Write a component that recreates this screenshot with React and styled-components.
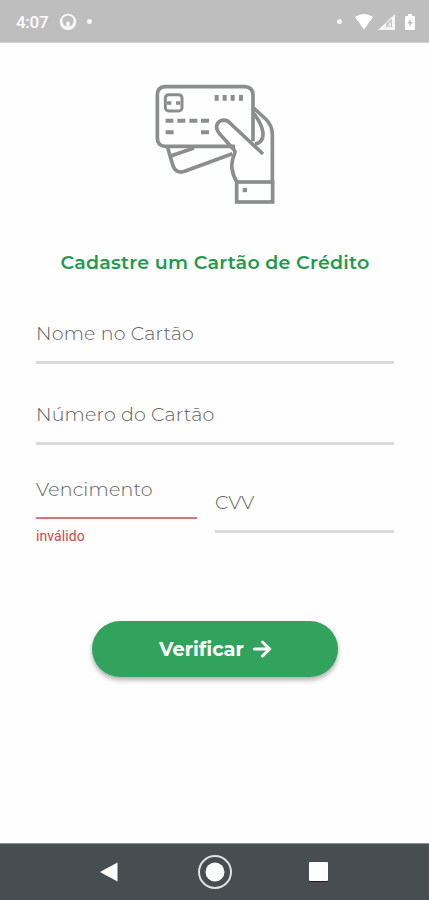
import React from 'react'
import styled, { createGlobalStyle } from 'styled-components'

const GlobalStyle = createGlobalStyle`
  * {
    box-sizing: border-box;
  }

  body {
    margin: 0;
    background-color: #fefefe;
  }
`

const Screen = styled.div`
  display: flex;
  flex-direction: column;
  width: 429px;
  height: 900px;
  overflow: hidden;
  background-color: #fefefe;
  font-family: Montserrat, Inter, sans-serif;
`

const StatusBar = styled.header`
  display: flex;
  align-items: center;
  flex-shrink: 0;
  height: 43px;
  padding: 1px 14px 0 16px;
  background-color: #bebebe;
  border-bottom: 1px solid #cfcfcf;
  color: #fdfdfd;

  svg {
    display: block;
  }
`

const Clock = styled.span`
  width: 33px;
  margin-right: 10px;
  font-family: Roboto, sans-serif;
  font-size: 17px;
  font-weight: 500;
  line-height: 20px;
  letter-spacing: -0.3px;
`

const StatusIcon = styled.svg`
  margin-left: ${props => props.$left || 0};
`

const Dot = styled.i`
  width: 5px;
  height: 5px;
  margin-left: ${props => props.$left};
  margin-right: ${props => props.$right || 0};
  border-radius: 50%;
  background-color: #f6f6f6;
`

const Content = styled.main`
  display: flex;
  flex-direction: column;
  flex: 1;
  padding: 32px 35px 0 36px;
`

const Illustration = styled.svg`
  display: block;
  width: 140px;
  height: 140px;
  margin-left: 109px;
  flex-shrink: 0;
`

const Title = styled.h1`
  margin: 35px 0 0;
  padding-left: 24.5px;
  color: #229a4e;
  font-size: 19px;
  font-weight: 600;
  line-height: 26px;
  letter-spacing: 0.22px;
  white-space: nowrap;
`

const Form = styled.form`
  display: flex;
  flex-direction: column;
`

const Field = styled.label`
  display: block;
  width: ${props => props.$width || '358px'};
  height: ${props => (props.$invalid ? '42px' : '43px')};
  margin-top: ${props => props.$top};
  border-bottom: ${props => (props.$invalid ? '2px solid #dc7474' : '3px solid #dadada')};
  color: #606060;
  font-size: 19px;
  font-weight: 300;
  line-height: 26px;
  letter-spacing: ${props => props.$spacing || '0.2px'};
  white-space: nowrap;
`

const FieldRow = styled.div`
  display: flex;
  justify-content: space-between;
  height: 102px;
`

const ErrorText = styled.span`
  display: block;
  margin-top: 8px;
  color: #d24545;
  font-family: Roboto, sans-serif;
  font-size: 14px;
  line-height: 18px;
  letter-spacing: 0.1px;
`

const Button = styled.button`
  display: flex;
  align-items: center;
  align-self: center;
  width: 246px;
  height: 56px;
  margin-top: 74px;
  padding: 0 0 1px 67px;
  border: 0;
  border-radius: 28px;
  background-color: #31a35d;
  box-shadow: 0 3px 5px rgba(0, 0, 0, 0.32);
  color: #fff;
  font-family: inherit;
  font-size: 19.4px;
  font-weight: 700;

  span {
    width: 94px;
    text-align: left;
  }
`

const NavBar = styled.nav`
  display: flex;
  align-items: center;
  flex-shrink: 0;
  height: 57px;
  padding: 0 100px 0 98px;
  border-top: 1px solid #8c9193;
  background-color: #464e52;

  svg {
    display: block;
  }

  svg:nth-child(2) {
    margin-left: 78px;
  }

  svg:nth-child(3) {
    margin-left: 76px;
  }
`

const CardIllustration = () => (
  <Illustration viewBox="0 0 420 420" fill="none" stroke="#8b8e8c" strokeWidth="11">
    <path d="M270 214H60Q37 212 37 188V59Q37 36 60 35H300Q323 37 324 59V199" />
    <rect x="61" y="59" width="50" height="49" rx="10" strokeWidth="9" />
    <path d="M66 84H79M93 84H106" strokeWidth="11" />
    <path d="M215 60V77M239 60V77M263 60V77M288 60V77" strokeWidth="12" />
    <path d="M62 137H85M97 137H121M133 137H157M168 137H192M62 172H86M168 172H192" strokeWidth="12" />
    <path d="M68 218L83 269Q92 298 119 289L262 236" />
    <path d="M79 242L147 219" />
    <path d="M354 237L258 147C241 127 218 136 215 153C213 165 219 171 226 179L267 224Q272 230 268 238C255 265 260 297 276 321" />
    <path d="M326 99L362 132Q382 151 382 178V321" />
    <path d="M327 116C341 135 352 155 354 174C355 192 347 204 330 207" />
    <rect x="275" y="321" width="108" height="60" />
    <path d="M293 345H306" strokeWidth="13" />
  </Illustration>
)

const fields = [
  { label: 'Nome no Cartão', top: '45px' },
  { label: 'Número do Cartão', top: '38px' },
]

const App = () => (
  <>
    <GlobalStyle />
    <Screen>
      <StatusBar>
        <Clock>4:07</Clock>
        <StatusIcon width="18" height="18" viewBox="0 0 18 18">
          <circle cx="9" cy="9" r="8.3" fill="#f8f8f8" />
          <circle cx="9" cy="8" r="5.6" fill="#bebebe" />
          <path d="M7 10.500a2 2 0 0 1 4 0L10 14H8z" fill="#f8f8f8" />
        </StatusIcon>
        <Dot $left="10px" $right="auto" />
        <Dot $left="auto" $right="13px" />
        <StatusIcon width="18" height="16" viewBox="0 0 18 16">
          <path d="M0 3Q9-3 18 3L9 15.5z" fill="#fff" />
        </StatusIcon>
        <StatusIcon width="17" height="16" viewBox="0 0 17 16" $left="5px">
          <path d="M0 16L17 0V16z" fill="#f5f5f5" />
          <path d="M8 13V9.500L14 4.500V13z" fill="#c7c7c7" />
          <path d="M10 12.5V10l3-2.5v5z" fill="#e5e5e5" />
        </StatusIcon>
        <StatusIcon width="10" height="16" viewBox="0 0 10 16" $left="10px">
          <path d="M3 0h4v2h2q1 0 1 1v12q0 1-1 1H1q-1 0-1-1V3q0-1 1-1h2z" fill="#fff" />
          <path d="M5.6 4.5L2.5 9.5h2v3.5l3-5h-1.9z" fill="#bebebe" />
        </StatusIcon>
      </StatusBar>

      <Content>
        <CardIllustration />
        <Title>Cadastre um Cartão de Crédito</Title>
        <Form>
          {fields.map((field, i) => (
            <Field key={i} $top={field.top}>{field.label}</Field>
          ))}
          <FieldRow>
            <div>
              <Field $width="161px" $top="32px" $invalid>Vencimento</Field>
              <ErrorText>inválido</ErrorText>
            </div>
            <Field $width="179px" $top="45px" $spacing="0">CVV</Field>
          </FieldRow>
          <Button type="button">
            <span>Verificar</span>
            <svg width="19" height="18" viewBox="0 0 19 18" fill="none" stroke="#fff" strokeWidth="3" strokeLinecap="round">
              <path d="M1.500 9H16M9.500 2L16.500 9L9.500 16" />
            </svg>
          </Button>
        </Form>
      </Content>

      <NavBar>
        <svg width="21" height="20" viewBox="0 0 21 20">
          <path d="M2 10L19.500 0.500V19.500z" fill="#fff" />
        </svg>
        <svg width="36" height="36" viewBox="0 0 36 36" fill="none">
          <circle cx="18" cy="18" r="16" stroke="#dfe1e2" strokeWidth="2" />
          <circle cx="18" cy="18" r="9.500" fill="#fff" />
        </svg>
        <svg width="19" height="20" viewBox="0 0 19 20">
          <rect y="2" width="19" height="18" rx="1" fill="#181e21" />
          <rect width="19" height="19" rx="1" fill="#fff" />
        </svg>
      </NavBar>
    </Screen>
  </>
)

export default App
